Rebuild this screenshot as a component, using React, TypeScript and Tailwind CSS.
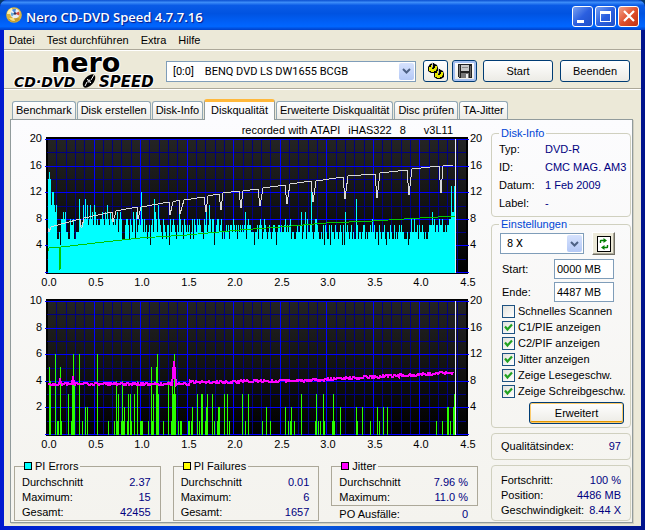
import React, { useState } from 'react';

// One hex digit per horizontal pixel, value = PI errors
const PI_ERRORS =
  'efeacca9a5' + '5648898966' + '5587785566' + '6b877a8b8a' + '78a897a978' +
  '778898798a' + '8798878789' + '6898555788' + '7587698596' + '787c868675' +
  '674786b986' + 'a876587657' + '7486787657' + '6986758767' + '6756858768' +
  '78766587a6' + '7a86884678' + '8678565676' + '7577687675' + '7676767957' +
  '8776664667' + '5787568765' + '6765677646' + '7767667867' + '6785665567' +
  '6679567958' + '667d656887' + '6556574765' + '5747665766' + '5676474967' +
  '65675655b7' + '5665677565' + '6676867566' + '4765667546' + '6576557565' +
  '6767665556' + '456' + '8668667576' + '6765655677' + '7978677687' +
  '7866767788' + 'd99d';

const PI_FAILURES: [number, number][] = [
  [49, 5], [50, 4], [55, 6], [57, 1], [58, 1], [60, 5], [61, 1], [68, 3], [71, 1], [72, 4], [73, 6], [74, 4],
  [79, 6], [82, 1], [85, 2], [87, 2], [97, 6], [108, 1], [114, 1], [116, 4], [117, 1], [118, 3], [121, 1],
  [122, 4], [123, 1], [124, 2], [127, 1], [128, 3], [130, 3], [131, 1], [134, 3], [137, 4], [140, 1], [141, 1],
  [142, 1], [148, 1], [151, 5], [152, 1], [153, 3], [156, 5], [157, 6], [158, 3], [163, 1], [168, 4], [171, 1],
  [172, 4], [173, 3], [174, 6], [175, 3], [178, 1], [180, 1], [181, 1], [188, 1], [189, 1], [191, 1], [192, 2],
  [197, 3], [199, 1], [201, 3], [202, 3], [205, 1], [206, 2], [207, 3], [212, 3], [214, 1], [217, 1], [218, 2],
  [219, 2], [224, 3], [227, 3], [229, 1], [242, 3], [245, 1], [248, 3], [262, 1], [266, 2], [270, 1], [285, 2],
  [288, 1], [290, 1], [291, 2], [294, 1], [301, 3], [315, 1], [316, 3], [318, 1], [320, 1], [323, 3], [324, 1],
  [332, 1], [333, 3], [334, 1], [340, 2], [356, 2], [357, 1], [362, 2], [370, 1], [377, 2], [379, 1], [383, 2],
  [387, 2], [436, 1], [442, 1], [447, 2], [448, 2], [450, 1], [453, 2], [454, 3],
];

const READ_SPEED =
  '28,92 29,96 31,91 34,90 60,83 61,91 62,91 64,82 92,76 93,86 96,75 117,71 118,83 121,71 149,66 150,79 153,66 ' +
  '159,64 160,78 164,64 184,61 186,76 188,60 199,58 201,74 203,57 219,55 221,72 223,55 238,53 240,70 243,52 ' +
  '265,49 267,68 270,48 291,45 293,66 296,45 323,41 325,63 328,40 355,38 357,62 360,37 387,34 389,59 392,33 ' +
  '419,30 421,57 423,30 425,29 433,29';

const WRITE_SPEED =
  '28,115 29,112 39,111 40,134 41,111 50,110 75,107 120,102 167,99 220,94 260,91 306,87 353,85 400,82 436,80';

const BASE = 136;

const jitterBase = (x: number) => {
  if (x === 73) return 375;
  if (x === 60) return 379;
  if (x === 174) return 361;
  if (x === 173 || x === 175) return 373;
  if (x < 190) return 384;
  if (x < 300) return 382 - (x - 190) / 100;
  return 381 - (x - 300) / 18;
};

const jitterPoints = () => {
  const points: string[] = [];
  for (let x = 48; x < 454; x++) {
    const seed = Math.abs(Math.sin(x * 91.7) * 4375.5) % 1;
    const wobble = Math.round(seed * 3 - 1.5);
    points.push(`${x - 20},${Math.round(jitterBase(x)) - 298 + wobble}`);
  }
  return points.join(' ');
};

interface ChartProps {
  id: string;
  label: string;
  leftLabels: number[];
  rightLabels: number[];
  children: React.ReactNode;
}

const Chart: React.FC<ChartProps> = ({ id, label, leftLabels, rightLabels, children }) => {
  const columns = Array.from({ length: 46 }, (_, i) => i);
  const rows = Array.from({ length: 11 }, (_, i) => i);
  const rowY = (i: number) => 3 + Math.round(i * 13.3);
  const colX = (i: number) => 27 + Math.round(i * 9.31);

  return (
    <svg viewBox="0 0 464 158" className="block w-full overflow-visible" role="img" aria-label={label}>
      <defs>
        <linearGradient id={id} x1="0" y1="0" x2="0" y2="1">
          <stop offset="0" stopColor="#242424" />
          <stop offset="1" stopColor="#000" />
        </linearGradient>
      </defs>
      <g shapeRendering="crispEdges">
        <rect x="26" y="1" width="422" height="137" fill="#000" />
        <rect x="28" y="3" width="418" height="133" fill={`url(#${id})`} />
        {columns.map(i => i % 5 !== 0 && <rect key={i} x={colX(i)} y="3" width="1" height="134" fill="#000080" />)}
        {rows.map(i => i % 2 === 1 && <rect key={i} x="27" y={rowY(i)} width="419" height="1" fill="#000080" />)}
        {columns.map(i => i % 5 === 0 && i > 0 && i < 45 && (
          <rect key={i} x={colX(i)} y="3" width="1" height="134" fill="#0000ff" />
        ))}
        {rows.map(i => i % 2 === 0 && <rect key={i} x="25" y={rowY(i)} width="424" height="1" fill="#0000ff" />)}
        {children}
        <rect x="435" y="3" width="1" height="134" fill="#e8e8f8" />
      </g>
      <g className="text-[11px]" fill="#000">
        {leftLabels.map((v, i) => (
          <text key={v} x="22" y={rowY(i * 2) + 3} textAnchor="end">{v}</text>
        ))}
        {rightLabels.map((v, i) => (
          <text key={v} x="450" y={rowY(i * 2) + 3}>{v}</text>
        ))}
        {columns.map(i => i % 5 === 0 && (
          <text key={i} x={colX(i) + 2} y="150" textAnchor="middle">{(i / 10).toFixed(1)}</text>
        ))}
      </g>
    </svg>
  );
};

const NeroLogo = () => (
  <svg viewBox="0 0 146 35" className="h-[35px] w-[146px] shrink-0 overflow-visible" role="img" aria-label="nero CD-DVD Speed">
    <g fontFamily="DejaVu Sans" fontWeight="bold" stroke="#fff" strokeWidth="2" paintOrder="stroke">
      <text x="37" y="18" fontSize="27" fill="#000">nero</text>
      <text x="0" y="33" fontSize="14" fontStyle="italic" fill="#000">CD·DVD</text>
      <text x="85" y="33" fontSize="15" fontStyle="italic" fill="#000">SPEED</text>
    </g>
    <ellipse cx="75" cy="27" rx="8" ry="4.5" fill="#000" transform="rotate(-48 75 27)" />
    <path d="M71 32l2-4M77 26l3-5M73 25l4 4" stroke="#fff" strokeWidth="1" />
    <circle cx="75" cy="27" r="1.5" fill="#fff" />
    <circle cx="75" cy="27" r="0.6" fill="#000" />
  </svg>
);

const DiscIcon = () => (
  <svg viewBox="0 0 16 16" className="h-4 w-4">
    <circle cx="8" cy="8" r="7.8" fill="#d9b640" />
    <path d="M1 7a7 7 0 0 1 5-6l1 6z" fill="#fff2a8" />
    <path d="M2 12a7.5 7.5 0 0 0 12 0l-5-3z" fill="#c49a2c" />
    <path d="M3 11a6 6 0 0 0 6 3l-1-3z" fill="#f6df80" />
    <circle cx="9" cy="6.5" r="4.8" fill="#e9eef5" />
    <path d="M9 6.5 6 3a4.5 4.5 0 0 1 4-1z" fill="#4c8be0" />
    <path d="M9 6.5l4-2a4.5 4.5 0 0 1 0 4z" fill="#d84a3c" />
    <path d="M9 6.5 6 9.5a4.5 4.5 0 0 1-1-4z" fill="#65a8d8" />
    <circle cx="9" cy="6.5" r="1.3" fill="#335" />
  </svg>
);

const GearsIcon = () => (
  <svg viewBox="0 0 18 18" className="h-[18px] w-[18px]">
    <g fill="#000">
      <path d="M1 5l2-3 3-1 4 2 1 3 0 3-3 2H4L1 9z" />
      <path d="M7 11l2-3 3-1 4 2 1 3 0 3-3 2h-4l-3-2z" />
    </g>
    <g fill="#e8e800">
      <path d="M2 5h2V3h2v3h2V4h2v3l-1 1v1H7v1H4V9H2V7z" />
      <path d="M8 11h2V9h2v3h2v-2h2v3l-1 1v1h-2v1h-3v-1H8v-2z" />
    </g>
    <path d="M6 1v6M12 7v6" stroke="#000" strokeWidth="2" />
    <path d="M5.5 0.5v5M11.5 6.5v5" stroke="#bbb" strokeWidth="1" />
  </svg>
);

const DiskIcon = () => (
  <svg viewBox="0 0 14 14" className="h-[14px] w-[14px]" shapeRendering="crispEdges">
    <path d="M0 0h14v14H1L0 13z" fill="#222" />
    <rect x="3" y="1" width="8" height="6" fill="#c8c8c8" />
    <rect x="4" y="3" width="6" height="1" fill="#888" />
    <rect x="1" y="1" width="1" height="12" fill="#777" />
    <rect x="12" y="2" width="1" height="11" fill="#666" />
    <rect x="3" y="9" width="8" height="5" fill="#777" />
    <rect x="8" y="10" width="2" height="4" fill="#eee" />
  </svg>
);

const RefreshIcon = () => (
  <svg viewBox="0 0 14 16" className="h-4 w-[14px]">
    <rect x="0.5" y="0.5" width="13" height="15" fill="#fff" stroke="#000" />
    <path d="M3.5 7V5q0-.5.5-.5h3M10.5 9v2q0 .5-.5.5H7" fill="none" stroke="#008000" strokeWidth="1.4" />
    <path d="M6.5 2v5L10 4.5zM7.5 9v5L4 11.5z" fill="#008000" />
  </svg>
);

interface ComboProps {
  label: string;
  value: string;
  className: string;
}

const Combo: React.FC<ComboProps> = ({ label, value, className }) => (
  <div className={`relative ${className}`}>
    <select
      aria-label={label}
      className="block h-[21px] w-full appearance-none border border-[#7f9db9] bg-white pl-1.5 pr-5 font-['Roboto',sans-serif] leading-[19px]"
    >
      <option>{value}</option>
    </select>
    <span className="pointer-events-none absolute right-0.5 top-0.5 flex h-[17px] w-[15px] items-center justify-center rounded-xs bg-linear-to-b from-[#d6e2fd] to-[#b4c8f6]">
      <svg viewBox="0 0 9 6" className="h-1.5 w-[9px]">
        <path d="M1 1l3.5 3.5L8 1" fill="none" stroke="#4d6185" strokeWidth="2" />
      </svg>
    </span>
  </div>
);

const xpButton =
  'flex h-[22px] items-center justify-center rounded-[3px] border border-[#003c74] bg-linear-to-b from-white to-[#ecebe5]';

const tabs = ['Benchmark', 'Disk erstellen', 'Disk-Info', 'Diskqualität', 'Erweiterte Diskqualität', 'Disc prüfen', 'TA-Jitter'];

const Row = ({ name, value }: { name: string; value: string }) => (
  <div className="flex justify-between whitespace-nowrap leading-[15px]">
    <span>{name}</span>
    <span className="text-[#000080]">{value}</span>
  </div>
);

interface StatBoxProps {
  title: string;
  swatch: string;
  rows: [string, string][];
}

const StatBox: React.FC<StatBoxProps> = ({ title, swatch, rows }) => (
  <fieldset className="min-w-0 border border-[#aca899] pl-[7px] pr-[9px] pt-0.5">
    <legend className="ml-0.5 flex items-center gap-[3px] pr-0.5 leading-[14px]">
      <span className={`h-2 w-2 border border-black ${swatch}`} />
      {title}
    </legend>
    {rows.map(([name, value]) => <Row key={name} name={name} value={value} />)}
  </fieldset>
);

const Check = ({ label, defaultChecked }: { label: string; defaultChecked: boolean }) => (
  <label className="flex h-4 items-center gap-[3px] whitespace-nowrap">
    <span className="relative flex h-[13px] w-[13px] shrink-0">
      <input
        type="checkbox"
        defaultChecked={defaultChecked}
        className="peer h-[13px] w-[13px] appearance-none border border-[#1d5281] bg-linear-to-br from-[#e2e2dc] to-white"
      />
      <svg viewBox="0 0 13 13" className="pointer-events-none absolute inset-0 hidden h-[13px] w-[13px] peer-checked:block">
        <path d="M3 5.5l2.5 3L10 3.5" fill="none" stroke="#21a121" strokeWidth="2.2" />
      </svg>
    </span>
    {label}
  </label>
);

const group = 'min-w-0 rounded-[4px] border border-[#d0d0bf]';

const App: React.FC = () => {
  const [activeTab, setActiveTab] = useState('Diskqualität');

  return (
    <div className="bg-[#06396b] font-['Liberation_Sans',Arial,sans-serif] text-[11px] text-black">
      <div className="rounded-t-[7px] bg-linear-to-r from-[#0019cf] via-[#0855dd] to-[#00138c]">
        <header className="flex h-[30px] items-center gap-1 rounded-t-[7px] bg-[linear-gradient(180deg,#0a4fd0_0%,#3c8cf8_8%,#0a5be6_18%,#0053e1_45%,#0060f8_75%,#0066ff_88%,#0040c8_100%)] pl-1.5 pr-[6px] text-white">
          <DiscIcon />
          <h1 className="grow pt-1 font-['Open_Sans',sans-serif] text-[13px] font-semibold leading-5 [text-shadow:1px_1px_1px_#0a1883]">
            Nero CD-DVD Speed 4.7.7.16
          </h1>
          <div className="flex gap-0.5 pt-0.5">
            <button aria-label="Minimieren" className="flex h-[21px] w-[21px] rounded-[3px] border border-white bg-linear-to-br from-[#7aa0f0] via-[#2b5fe0] to-[#1f50c8] pl-1 pt-[13px]">
              <span className="h-[3px] w-[7px] bg-white" />
            </button>
            <button aria-label="Maximieren" className="flex h-[21px] w-[21px] items-center justify-center rounded-[3px] border border-white bg-linear-to-br from-[#7aa0f0] via-[#2b5fe0] to-[#1f50c8]">
              <span className="h-[11px] w-[11px] border border-t-[3px] border-white" />
            </button>
            <button aria-label="Schließen" className="flex h-[21px] w-[21px] items-center justify-center rounded-[3px] border border-white bg-linear-to-br from-[#f0a088] via-[#e0502c] to-[#c03010]">
              <svg viewBox="0 0 12 12" className="h-3 w-3">
                <path d="M1 1l10 10M11 1L1 11" stroke="#fff" strokeWidth="2.2" />
              </svg>
            </button>
          </div>
        </header>

        <div className="px-1 pb-1">
          <div className="bg-[#ece9d8]">
            <nav className="flex h-5 items-center gap-3 border-b border-[#aca899] pl-[5px] leading-[18px]">
              <button>Datei</button>
              <button>Test durchführen</button>
              <button>Extra</button>
              <button>Hilfe</button>
            </nav>

            <div className="flex h-[39px] items-center border-b border-t border-b-[#aca899] border-t-white pl-2.5 pr-[11px] pt-[3px]">
              <NeroLogo />
              <Combo label="Laufwerk" value={'[0:0]\u00a0\u00a0\u00a0\u00a0BENQ DVD LS DW1655 BCGB'} className="ml-1.5 grow" />
              <button aria-label="Optionen" className={`${xpButton} ml-[7px] w-[25px]`}><GearsIcon /></button>
              <button aria-label="Speichern" className={`${xpButton} ml-1 w-[25px] shadow-[inset_0_0_0_2px_#a6c0f0]`}><DiskIcon /></button>
              <button className={`${xpButton} ml-1.5 w-[70px]`}>Start</button>
              <button className={`${xpButton} ml-[7px] w-[70px]`}>Beenden</button>
            </div>

            <main className="border-t border-white pb-[3px] pl-1.5 pr-2 pt-[9px]">
              <div role="tablist" className="flex items-end gap-px pl-0.5">
                {tabs.map(tab => (
                  <button
                    key={tab}
                    role="tab"
                    aria-selected={tab === activeTab}
                    onClick={() => setActiveTab(tab)}
                    className={tab === activeTab
                      ? 'relative -mb-px h-[21px] whitespace-nowrap rounded-t-[3px] border border-b-0 border-t-[3px] border-[#919b9c] border-t-[#ffb83c] bg-[#fcfcfe] px-1.5 pb-1'
                      : 'h-[18px] whitespace-nowrap rounded-t-[3px] border border-b-0 border-[#91a7b4] bg-linear-to-b from-white to-[#ecebe6] px-[3px]'}
                  >
                    {tab}
                  </button>
                ))}
              </div>

              <section className="flex gap-[7px] border border-[#919b9c] bg-linear-to-b from-[#fcfcfe] to-[#f4f3ee] pl-[3px] pr-px pt-1 shadow-[1px_1px_0_#d0cec0]">
                <div className="min-w-0 grow">
                  <div className="pl-1.5">
                    <p className="flex justify-end gap-2 pr-[31px] leading-3">
                      <span>recorded with ATAPI</span>
                      <span>iHAS322</span>
                      <span>8</span>
                      <span className="pl-2.5">v3L11</span>
                    </p>
                    <Chart id="errorsBack" label="PI Errors" leftLabels={[20, 16, 12, 8, 4]} rightLabels={[20, 16, 12, 8, 4]}>
                      {PI_ERRORS.split('').map((digit, i) => {
                        const h = Math.round(parseInt(digit, 16) * 6.65);
                        return <rect key={i} x={28 + i} y={BASE - h} width="1" height={h + 1} fill="#00ffff" />;
                      })}
                      <polyline points={READ_SPEED} fill="none" stroke="#d8d8d8" strokeWidth="1" />
                      <polyline points={WRITE_SPEED} fill="none" stroke="#00c800" strokeWidth="1" />
                    </Chart>
                    <div className="pt-1">
                      <Chart id="failuresBack" label="PI Failures und Jitter" leftLabels={[10, 8, 6, 4, 2]} rightLabels={[20, 16, 12, 8, 4]}>
                        {PI_FAILURES.map(([x, value]) => {
                          const h = Math.round(value * 13.3);
                          return <rect key={x} x={x - 20} y={BASE - h} width="1" height={h + 1} fill="#2aff00" />;
                        })}
                        <polyline points={jitterPoints()} fill="none" stroke="#ff00ff" strokeWidth="2" />
                      </Chart>
                    </div>
                  </div>

                  <div className="grid grid-cols-3 items-start gap-3 pr-1.5 pt-[3px]">
                    <StatBox title="PI Errors" swatch="bg-[#00ffff]" rows={[['Durchschnitt', '2.37'], ['Maximum:', '15'], ['Gesamt:', '42455']]} />
                    <StatBox title="PI Failures" swatch="bg-[#ffff00]" rows={[['Durchschnitt', '0.01'], ['Maximum:', '6'], ['Gesamt:', '1657']]} />
                    <div>
                      <StatBox title="Jitter" swatch="bg-[#ff00ff]" rows={[['Durchschnitt', '7.96 %'], ['Maximum:', '11.0 %']]} />
                      <div className="pl-2 pr-2.5 pt-px"><Row name="PO Ausfälle:" value="0" /></div>
                    </div>
                  </div>
                </div>

                <aside className="flex w-[140px] shrink-0 flex-col pt-0.5">
                  <fieldset className={`${group} h-[91px] px-[7px]`}>
                    <legend className="px-0.5 leading-[14px] text-[#0046d5]">Disk-Info</legend>
                    <dl className="grid grid-cols-[46px_1fr] whitespace-nowrap leading-[18px]">
                      <dt>Typ:</dt><dd className="text-[#000080]">DVD-R</dd>
                      <dt>ID:</dt><dd className="text-[#000080]">CMC MAG. AM3</dd>
                      <dt>Datum:</dt><dd className="text-[#000080]">1 Feb 2009</dd>
                      <dt>Label:</dt><dd className="text-[#000080]">-</dd>
                    </dl>
                  </fieldset>

                  <fieldset className={`${group} px-[7px] pb-[3px]`}>
                    <legend className="px-0.5 leading-[14px] text-[#0046d5]">Einstellungen</legend>
                    <div className="flex items-center gap-2 pl-px pt-px">
                      <Combo label="Geschwindigkeit" value="8 X" className="w-[84px]" />
                      <button aria-label="Aktualisieren" className="flex h-[23px] w-[23px] items-center justify-center border border-b-[#716f64] border-l-white border-r-[#716f64] border-t-white bg-[#ece9d8] shadow-[inset_-1px_-1px_0_#aca899]">
                        <RefreshIcon />
                      </button>
                    </div>
                    <label className="flex items-center pl-[3px] pt-1">
                      <span className="w-[52px]">Start:</span>
                      <input type="text" defaultValue="0000 MB" className="h-5 w-[60px] border border-[#7f9db9] bg-white px-0.5" />
                    </label>
                    <label className="flex items-center pb-px pl-[3px] pt-[3px]">
                      <span className="w-[52px]">Ende:</span>
                      <input type="text" defaultValue="4487 MB" className="h-5 w-[60px] border border-[#7f9db9] bg-white px-0.5" />
                    </label>
                    <div className="pl-[3px]">
                      <Check label="Schnelles Scannen" defaultChecked={false} />
                      <Check label="C1/PIE anzeigen" defaultChecked />
                      <Check label="C2/PIF anzeigen" defaultChecked />
                      <Check label="Jitter anzeigen" defaultChecked />
                      <Check label="Zeige Lesegeschw." defaultChecked />
                      <Check label="Zeige Schreibgeschw." defaultChecked />
                    </div>
                    <button className={`${xpButton} ml-[30px] mt-[3px] w-[95px] shadow-[inset_0_0_0_1px_#fbca6a,inset_0_-2px_0_#e59700]`}>Erweitert</button>
                  </fieldset>

                  <div className={`${group} mt-[5px] px-[9px] py-[5px]`}>
                    <Row name="Qualitätsindex:" value="97" />
                  </div>
                  <div className={`${group} mt-[5px] px-[9px] pb-0.5 pt-[7px]`}>
                    <Row name="Fortschritt:" value="100 %" />
                    <Row name="Position:" value="4486 MB" />
                    <Row name="Geschwindigkeit:" value="8.44 X" />
                  </div>
                </aside>
              </section>
            </main>
          </div>
        </div>
      </div>
    </div>
  );
};

export default App;
